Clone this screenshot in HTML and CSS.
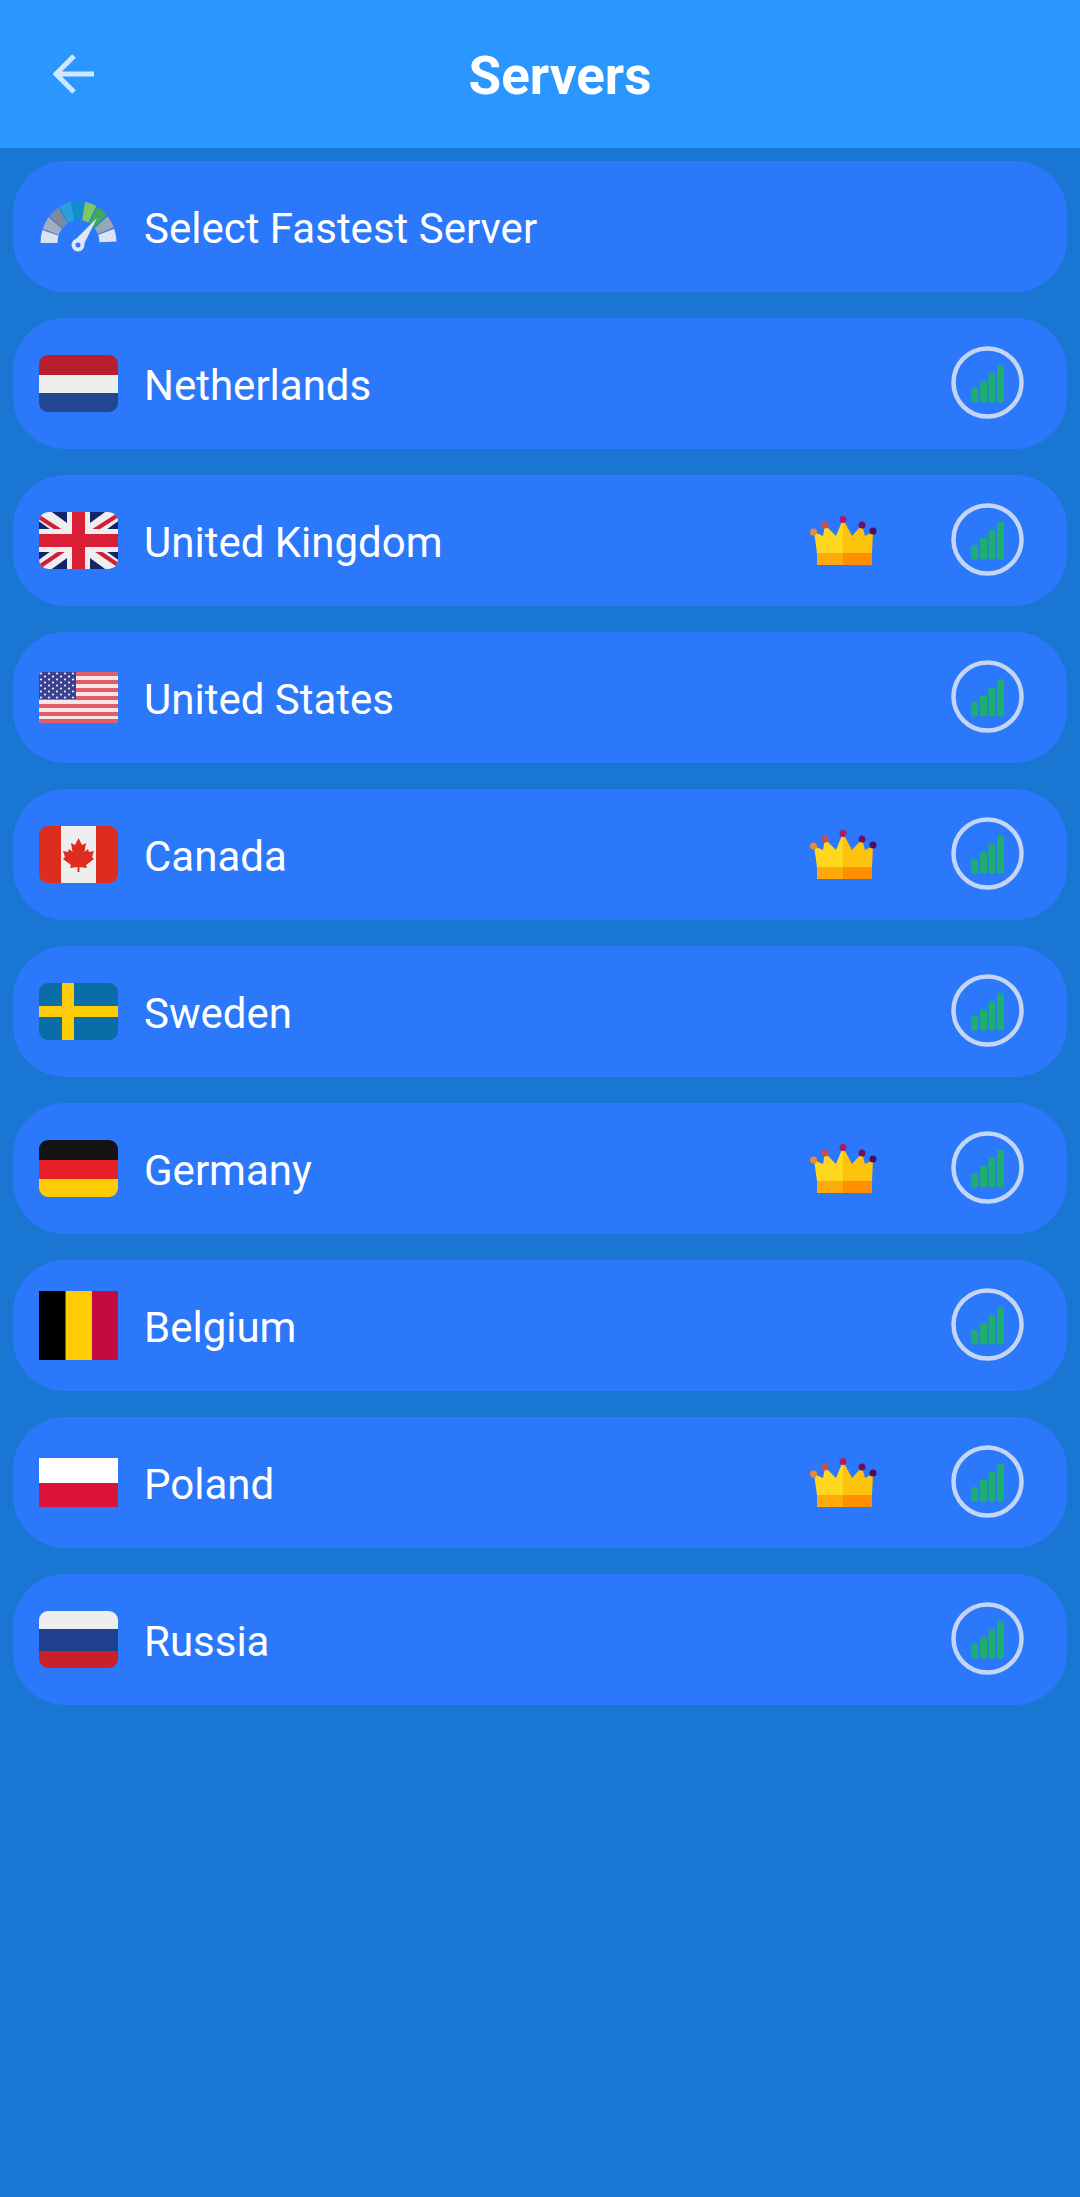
FILE: index.html
```html
<!DOCTYPE html>
<html>

<head>
    <title>Servers</title>

    <!-- For styling -->
    <link rel="stylesheet" href="styles.css">
</head>

<body>

    <!-- Shared icons -->
    <svg class="defs" width="0" height="0">
        <symbol id="crown" viewBox="0 0 67 50">
            <polygon points="4,16 13,20 15,9 26,20 33,3 33,37 7,37" fill="#ffd71f" />
            <polygon points="33,3 42,20 52,9 55,20 63,16 62,37 33,37" fill="#ffc30d" />
            <rect x="7" y="37" width="26" height="12" fill="#ffa90a" />
            <rect x="33" y="37" width="29" height="12" fill="#ff8f00" />
            <circle cx="3.500" cy="16" r="3.500" fill="#e8893c" />
            <circle cx="15" cy="9" r="3.500" fill="#c9504c" />
            <circle cx="33" cy="3.500" r="3.500" fill="#b01a62" />
            <circle cx="52" cy="9" r="3.500" fill="#6f1060" />
            <circle cx="63" cy="15" r="3.500" fill="#4a0f60" />
        </symbol>
        <symbol id="signal" viewBox="0 0 73 73">
            <circle cx="36.5" cy="36.5" r="34" fill="none" stroke="#c5d6f5" stroke-width="4.5" />
            <rect x="20" y="42" width="7" height="14.500" rx="2" fill="#1eae70" />
            <rect x="29" y="35" width="7" height="21.500" rx="2" fill="#1eae70" />
            <rect x="37.500" y="27" width="7" height="29.500" rx="2" fill="#1eae70" />
            <rect x="46" y="19" width="7" height="37.500" rx="2" fill="#1eae70" />
        </symbol>
    </svg>

    <div class="header">
        <svg class="back" width="42" height="40" viewBox="0 0 42 40">
            <path d="M41 20H4M21 2L3 20L21 38" fill="none" stroke="#cfe8ff" stroke-width="5" />
        </svg>
        <div class="title">Servers</div>
    </div>

    <div class="list">
        <div class="row">
            <svg class="flag" width="79" height="55" viewBox="0 0 79 55">
                <g transform="translate(0 44) scale(1 1.1) translate(0 -41)">
                    <path d="M1.5 41A38 38 0 0 1 3.36 29.26L19.53 34.51A21 21 0 0 0 18.5 41Z" fill="#dde3ee" />
                    <path d="M1.5 41A38 38 0 0 1 3.36 29.26L19.53 34.51A21 21 0 0 0 18.5 41Z" transform="rotate(20 39.5 41)" fill="#a3adbd" />
                    <path d="M1.5 41A38 38 0 0 1 3.36 29.26L19.53 34.51A21 21 0 0 0 18.5 41Z" transform="rotate(40 39.5 41)" fill="#7c8b9e" />
                    <path d="M1.5 41A38 38 0 0 1 3.36 29.26L19.53 34.51A21 21 0 0 0 18.5 41Z" transform="rotate(60 39.5 41)" fill="#2a9fd8" />
                    <path d="M1.5 41A38 38 0 0 1 3.36 29.26L19.53 34.51A21 21 0 0 0 18.5 41Z" transform="rotate(80 39.5 41)" fill="#108fc9" />
                    <path d="M1.5 41A38 38 0 0 1 3.36 29.26L19.53 34.51A21 21 0 0 0 18.5 41Z" transform="rotate(100 39.5 41)" fill="#7dc863" />
                    <path d="M1.5 41A38 38 0 0 1 3.36 29.26L19.53 34.51A21 21 0 0 0 18.5 41Z" transform="rotate(120 39.5 41)" fill="#3fa95b" />
                    <path d="M1.5 41A38 38 0 0 1 3.36 29.26L19.53 34.51A21 21 0 0 0 18.5 41Z" transform="rotate(140 39.5 41)" fill="#9aa6b6" />
                    <path d="M1.5 41A38 38 0 0 1 3.36 29.26L19.53 34.51A21 21 0 0 0 18.5 41Z" transform="rotate(160 39.5 41)" fill="#dde3ee" />
                </g>
                <path d="M58 19L44 47L34 43Z" fill="#dfe8f6" />
                <circle cx="39" cy="46" r="6.5" fill="#dfe8f6" />
                <circle cx="39" cy="46" r="2.5" fill="#2b78fb" />
            </svg>
            <div class="name">Select Fastest Server</div>
        </div>

        <div class="row">
            <svg class="flag rounded" width="79" height="57" viewBox="0 0 79 57">
                <rect width="79" height="20" fill="#b71f2e" />
                <rect y="20" width="79" height="18" fill="#eeeeee" />
                <rect y="38" width="79" height="19" fill="#20478f" />
            </svg>
            <div class="name">Netherlands</div>
            <svg class="signal" width="73" height="73"><use href="#signal" /></svg>
        </div>

        <div class="row">
            <svg class="flag rounded" width="79" height="57" viewBox="0 0 79 57">
                <rect width="79" height="57" fill="#13246b" />
                <path d="M0 0L79 57M79 0L0 57" stroke="#eeeeee" stroke-width="15" />
                <path d="M0 5L28 23M79 3L51 21M0 55L28 36M79 53L51 34" stroke="#cf1f36" stroke-width="4" />
                <path d="M39.5 0V57M0 28.5H79" stroke="#eeeeee" stroke-width="23" />
                <path d="M39.5 0V57M0 28.5H79" stroke="#d81f35" stroke-width="13" />
            </svg>
            <div class="name">United Kingdom</div>
            <svg class="crown" width="67" height="50"><use href="#crown" /></svg>
            <svg class="signal" width="73" height="73"><use href="#signal" /></svg>
        </div>

        <div class="row">
            <svg class="flag rounded-small" width="79" height="51" viewBox="0 0 79 51">
                <defs>
                    <pattern id="stars" width="8" height="6" patternUnits="userSpaceOnUse">
                        <circle cx="2" cy="1.5" r="1.1" fill="#f2f2f2" />
                        <circle cx="6" cy="4.5" r="1.1" fill="#f2f2f2" />
                    </pattern>
                </defs>
                <rect width="79" height="51" fill="#f5e6e8" />
                <rect width="79" height="4" fill="#e25c68" />
                <rect y="8" width="79" height="4" fill="#e25c68" />
                <rect y="16" width="79" height="4" fill="#e25c68" />
                <rect y="24" width="79" height="4" fill="#e25c68" />
                <rect y="32" width="79" height="4" fill="#e25c68" />
                <rect y="40" width="79" height="4" fill="#e25c68" />
                <rect y="47" width="79" height="4" fill="#e25c68" />
                <rect width="37" height="27" fill="#39408f" />
                <rect width="37" height="27" fill="url(#stars)" />
            </svg>
            <div class="name">United States</div>
            <svg class="signal" width="73" height="73"><use href="#signal" /></svg>
        </div>

        <div class="row">
            <svg class="flag rounded" width="79" height="57" viewBox="0 0 79 57">
                <rect width="79" height="57" fill="#dd2d1e" />
                <rect x="22" width="35" height="57" fill="#eeeeee" />
                <path d="M39.5 12L43 19L47 17L45.500 26L49 23L50 26L55 25L53 31L55 33L47 39L48 42L40.500 41V46H38.500V41L31 42L32 39L24 33L26 31L24 25L29 26L30 23L33.500 26L32 17L36 19Z" fill="#dd2d1e" />
            </svg>
            <div class="name">Canada</div>
            <svg class="crown" width="67" height="50"><use href="#crown" /></svg>
            <svg class="signal" width="73" height="73"><use href="#signal" /></svg>
        </div>

        <div class="row">
            <svg class="flag rounded" width="79" height="57" viewBox="0 0 79 57">
                <rect width="79" height="57" fill="#0a6da8" />
                <rect x="23" width="12" height="57" fill="#ffcb05" />
                <rect y="23" width="79" height="11" fill="#ffcb05" />
            </svg>
            <div class="name">Sweden</div>
            <svg class="signal" width="73" height="73"><use href="#signal" /></svg>
        </div>

        <div class="row">
            <svg class="flag rounded" width="79" height="57" viewBox="0 0 79 57">
                <rect width="79" height="20" fill="#141414" />
                <rect y="20" width="79" height="19" fill="#e8202a" />
                <rect y="39" width="79" height="18" fill="#ffcb05" />
            </svg>
            <div class="name">Germany</div>
            <svg class="crown" width="67" height="50"><use href="#crown" /></svg>
            <svg class="signal" width="73" height="73"><use href="#signal" /></svg>
        </div>

        <div class="row">
            <svg class="flag" width="79" height="69" viewBox="0 0 79 69">
                <rect width="27" height="69" fill="#000000" />
                <rect x="26.500" width="26.500" height="69" fill="#ffcb05" />
                <rect x="53" width="26" height="69" fill="#c30b40" />
            </svg>
            <div class="name">Belgium</div>
            <svg class="signal" width="73" height="73"><use href="#signal" /></svg>
        </div>

        <div class="row">
            <svg class="flag" width="79" height="49" viewBox="0 0 79 49">
                <rect width="79" height="25" fill="#ffffff" />
                <rect y="25" width="79" height="24" fill="#dc143c" />
            </svg>
            <div class="name">Poland</div>
            <svg class="crown" width="67" height="50"><use href="#crown" /></svg>
            <svg class="signal" width="73" height="73"><use href="#signal" /></svg>
        </div>

        <div class="row">
            <svg class="flag rounded" width="79" height="57" viewBox="0 0 79 57">
                <rect width="79" height="18" fill="#eeeeee" />
                <rect y="18" width="79" height="22" fill="#20408f" />
                <rect y="40" width="79" height="17" fill="#c9202a" />
            </svg>
            <div class="name">Russia</div>
            <svg class="signal" width="73" height="73"><use href="#signal" /></svg>
        </div>
    </div>

</body>

</html>
```

FILE: styles.css
```css
html,
body {
    margin: 0;
    height: 100%;
}

body {
    background-color: #1976d2;
    font-family: Roboto, "Liberation Sans", sans-serif;
    color: white;
}

.defs {
    display: block;
    height: 0;
}

.header {
    height: 148px;
    padding-left: 53px;
    display: flex;
    align-items: center;
    background-color: #2997ff;
    box-sizing: border-box;
}

.back {
    flex: none;
}

.title {
    flex: 1;
    margin-right: 55px;
    padding-top: 4px;
    text-align: center;
    font-size: 53px;
    font-weight: bold;
}

.list {
    padding: 13px 13px 0;
    display: flex;
    flex-direction: column;
    gap: 26px;
}

.row {
    height: 131px;
    padding: 0 43px 0 26px;
    display: flex;
    align-items: center;
    background-color: #2b78fb;
    border-radius: 52px;
}

.flag {
    flex: none;
    display: block;
}

.rounded {
    border-radius: 9px;
}

.rounded-small {
    border-radius: 4px;
}

.name {
    flex: 1;
    margin-left: 26px;
    padding-top: 4px;
    font-size: 42px;
}

.crown {
    flex: none;
    margin-right: 74px;
}

.signal {
    flex: none;
    margin-bottom: 2px;
}
```
